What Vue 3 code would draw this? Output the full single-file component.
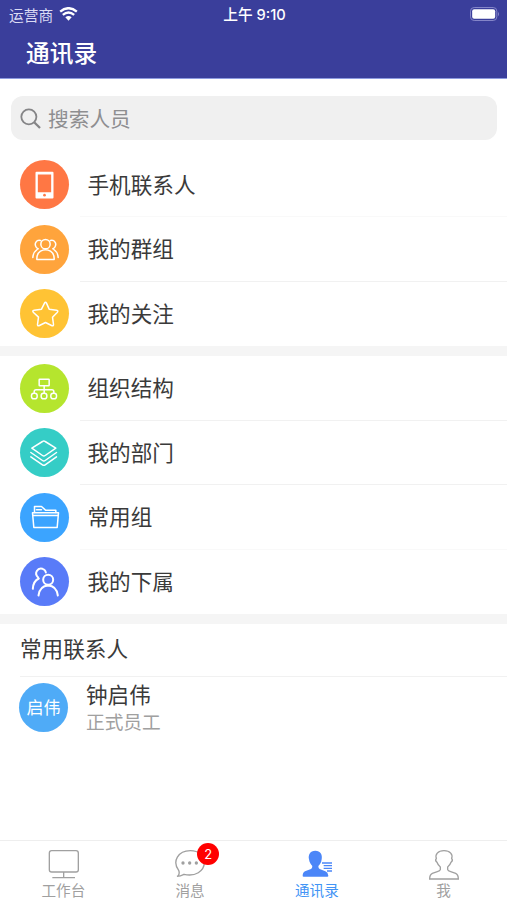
<script setup>
const groups = [
  [
    { label: '手机联系人', icon: 'phone', faint: true },
    { label: '我的群组', icon: 'group' },
    { label: '我的关注', icon: 'star' },
  ],
  [
    { label: '组织结构', icon: 'org' },
    { label: '我的部门', icon: 'layers' },
    { label: '常用组', icon: 'folder', faint: true },
    { label: '我的下属', icon: 'people' },
  ],
]
</script>

<template>
  <div class="screen">
    <header class="header">
      <div class="status">
        <div class="carrier">
          <span>运营商</span>
          <svg class="wifi" viewBox="0 0 56 42">
            <path d="M28 41 L18.500 31 Q28 23 37.500 31 Z" fill="#fff" />
            <path d="M3 14 Q28 -7 53 14 M11 23.500 Q28 9 45 23.500" fill="none" stroke="#fff" stroke-width="7" />
          </svg>
        </div>
        <div class="time">上午 9:10</div>
        <svg class="battery" viewBox="0 0 90 42">
          <rect x="1.500" y="1.500" width="79" height="39" rx="11" fill="none" stroke="#8485c8" stroke-width="3" />
          <rect x="6.500" y="6.500" width="69" height="29" rx="6" fill="#fff" />
          <path d="M84 14 Q90 21 84 28 Z" fill="#8485c8" />
        </svg>
      </div>
      <h1>通讯录</h1>
    </header>

    <div class="search">
      <svg viewBox="0 0 64 64">
        <circle cx="27" cy="27" r="23" />
        <path d="M44 44 L61 61" stroke-width="7" />
      </svg>
      <span>搜索人员</span>
    </div>

    <section v-for="(rows, g) in groups" :key="g" class="group">
      <div v-for="row in rows" :key="row.label" class="row">
        <div class="circle" :class="row.icon">
          <svg viewBox="-73.500 -73.500 147 147">
            <g v-if="row.icon === 'phone'">
              <path class="solid" fill-rule="evenodd" d="M-24 -38H24Q27 -38 27 -35V39Q27 42 24 42H-24Q-27 42 -27 39V-35Q-27 -38 -24 -38ZM-20 -30V23H20V-30Z" />
              <circle class="dot" cx="0" cy="32" r="4" />
            </g>
            <g v-else-if="row.icon === 'group'">
              <circle cx="3" cy="-16" r="14" />
              <path d="M-23 30Q-24 13 -12 5Q3 -4 18 5Q30 13 29 30Z" />
              <path d="M-12 -27C-24 -30 -32 -18 -25 -7Q-22 -3 -19 -2M-22 0Q-34 8 -35 24M18 -27C30 -30 38 -18 31 -7Q28 -3 25 -2M28 0Q40 8 41 24" />
            </g>
            <path v-else-if="row.icon === 'star'" d="M0 -31Q3 -37 6 -31L14 -13L36 -10Q43 -9 38 -3L24 11L27 33Q27 39 21 36L3 27L-15 36Q-21 39 -21 33L-18 11L-33 -3Q-38 -9 -31 -10L-9 -13Z" />
            <g v-else-if="row.icon === 'org'">
              <rect x="-16" y="-28" width="30" height="20" rx="2" />
              <path d="M-1 -8V13M-31 13V10Q-31 4 -25 4H22Q28 4 28 10V13" />
              <rect x="-39" y="14" width="17" height="17" rx="7" />
              <rect x="-10" y="14" width="17" height="17" rx="7" />
              <rect x="19" y="14" width="17" height="17" rx="7" />
            </g>
            <g v-else-if="row.icon === 'layers'">
              <path d="M-6 -33Q-2 -36 2 -33L34 -13L2 9Q-2 12 -6 9L-38 -13Z" />
              <path d="M-41 0L-6 24Q-2 27 2 24L36 0M-41 13L-6 37Q-2 40 2 37L36 13" />
            </g>
            <g v-else-if="row.icon === 'folder'">
              <path d="M-30 -15V-33H-9L3 -22H34V-15M-24 -23H-9" />
              <path d="M-36 -14H42L38 30H-32ZM-33 -6H39" />
            </g>
            <g v-else class="thick">
              <circle cx="11" cy="-5" r="15" />
              <path d="M-18 42Q-14 13 11 12Q36 13 40 42" />
              <path d="M-19 -12C-33 -25 -20 -42 -6 -38Q3 -35 4 -27M-35 22Q-34 -1 -17 -9" />
            </g>
          </svg>
        </div>
        <div class="label" :class="{ faint: row.faint }">{{ row.label }}</div>
      </div>
    </section>

    <section class="frequent">
      <h2>常用联系人</h2>
      <div class="contact">
        <div class="avatar">启伟</div>
        <div class="info">
          <div class="name">钟启伟</div>
          <div class="role">正式员工</div>
        </div>
      </div>
    </section>

    <nav class="tabs">
      <div class="tab">
        <svg viewBox="0 0 96 90">
          <rect x="7" y="2" width="87" height="64" rx="7" />
          <path d="M50 66V82M16 83H84" />
        </svg>
        <span>工作台</span>
      </div>
      <div class="tab">
        <div class="chat">
          <svg viewBox="0 0 96 90">
            <path d="M12 78Q18 71 14 61C-6 34 12 2 49 2C75 2 91 18 91 37C91 64 63 81 30 73Q19 79 9 79Z" />
            <g class="dots"><circle cx="27" cy="39" r="5" /><circle cx="47" cy="39" r="5" /><circle cx="67" cy="39" r="5" /></g>
          </svg>
          <span class="badge">2</span>
        </div>
        <span>消息</span>
      </div>
      <div class="tab active">
        <svg viewBox="0 0 96 90">
          <path class="fill" d="M43 2C27 2 21 15 24 28C25 38 30 44 34 48Q34 55 30 57L12 64Q5 67 5 78Q5 80 8 80H79Q82 80 82 77Q81 67 73 64L56 57Q52 55 52 48C57 43 61 38 62 28C65 14 58 2 43 2Z" />
          <path class="lines" d="M63 39H93M68 47H93M68 55H93M78 63H93" />
        </svg>
        <span>通讯录</span>
      </div>
      <div class="tab">
        <svg viewBox="0 0 96 90">
          <path d="M48 2C29 2 21 14 25 25Q20 31 27 37Q30 46 37 51V59Q36 63 28 65L13 70Q5 74 5 87H91Q91 74 83 70L68 65Q60 63 59 59V51Q66 46 69 37Q76 31 71 25C75 14 67 2 48 2Z" />
        </svg>
        <span>我</span>
      </div>
    </nav>
  </div>
</template>

<style>
body { margin: 0; background: #fff; }
</style>

<style scoped>
* { box-sizing: border-box; }
.screen {
  display: flex;
  flex-direction: column;
  width: 100%;
  height: 900px;
  overflow: hidden;
  background: #fff;
  color: #3a3a3a;
  font-family: "Noto Sans CJK SC", sans-serif;
}
h1, h2 { margin: 0; }
.header {
  height: 79px;
  flex: none;
  background: #3a3e9b;
  border-bottom: 1px solid #8d9be0;
  color: #fff;
}
.status {
  display: grid;
  grid-template-columns: 1fr auto 1fr;
  align-items: center;
  height: 27px;
  padding: 0 7px 0 9px;
  font-size: 14.7px;
  line-height: 27px;
}
.carrier { display: flex; align-items: center; gap: 6px; color: #dcdcf4; }
.wifi { width: 19px; height: 14px; margin-top: -1px; }
.time { padding-top: 2px; font-family: Inter, "Noto Sans CJK SC", sans-serif; font-weight: 500; font-size: 14.7px; }
.battery { width: 30px; height: 14px; margin-top: -1px; justify-self: end; }
h1 { padding-left: 26px; font-size: 23.700px; line-height: 50px; font-weight: 500; }
.search {
  display: flex;
  flex: none;
  align-items: center;
  gap: 7px;
  height: 44px;
  margin: 17px 10px 12.500px 11px;
  padding-left: 9px;
  border-radius: 12px;
  background: #f0f0f0;
  color: #8e8e90;
  font-size: 20.700px;
}
.search svg { width: 21px; height: 21px; fill: none; stroke: #858587; stroke-width: 5.5; }
.group { flex: none; border-bottom: 10px solid #f5f5f5; }
.row { display: flex; height: 64.5px; padding-left: 20px; align-items: center; }
.circle { flex: none; width: 49px; height: 49px; border-radius: 50%; }
.circle svg { display: block; width: 49px; height: 49px; fill: none; stroke: #fff; stroke-width: 4.5; stroke-linejoin: round; stroke-linecap: round; }
.circle .solid { fill: #fff; stroke: none; }
.circle .dot { fill: #ff7744; stroke: none; }
.circle .thick { stroke-width: 6; }
.phone { background: #ff7744; }
.group .circle.group { border: 0; background: #ffa43c; }
.star { background: #ffc334; }
.org { background: #b5e52e; }
.layers { background: #35cdc6; }
.folder { background: #3ba4ff; }
.people { background: #597bf8; }
.label {
  flex: 1;
  height: 100%;
  margin-left: 11px;
  padding-left: 7.500px;
  border-bottom: 1px solid #f1f1f1;
  font-size: 21.600px;
  line-height: 62px;
}
.label.faint { border-color: #f9f9f9; }
.row:last-child .label { border-color: transparent; }
.frequent { flex: 1; }
h2 { height: 53px; margin-left: 20px; border-bottom: 1px solid #f1f1f1; font-size: 21.600px; font-weight: 400; line-height: 47px; }
.contact { display: flex; height: 60px; align-items: center; padding-left: 19px; }
.avatar { width: 49px; height: 49px; border-radius: 50%; background: #4fabf7; color: #fff; font-size: 17px; line-height: 47px; text-align: center; }
.info { margin-left: 18px; }
.name { font-size: 21.600px; line-height: 28px; }
.role { color: #a0a0a0; font-size: 18.700px; line-height: 26px; }
.contact .info { padding-bottom: 1px; }
.tabs { display: flex; flex: none; height: 60px; border-top: 1px solid #eee; }
.tab { display: flex; flex: 1; flex-direction: column; align-items: center; padding-top: 9px; color: #a0a0a0; font-size: 14.600px; line-height: 19px; }
.tab svg { display: block; width: 32px; height: 30px; fill: none; stroke: #a0a0a0; stroke-width: 4; }
.tab.active { color: #4294f5; }
.tab .fill { fill: #4b86f8; stroke: none; }
.tab .lines { stroke: #4b86f8; stroke-width: 4; }
.chat { position: relative; }
.tab .dots { fill: #a0a0a0; stroke: none; }
.badge { position: absolute; top: -7px; right: -13px; width: 22px; height: 22px; border-radius: 50%; background: #f00; color: #fff; font-family: Inter, sans-serif; font-size: 13px; line-height: 22px; text-align: center; }
</style>
